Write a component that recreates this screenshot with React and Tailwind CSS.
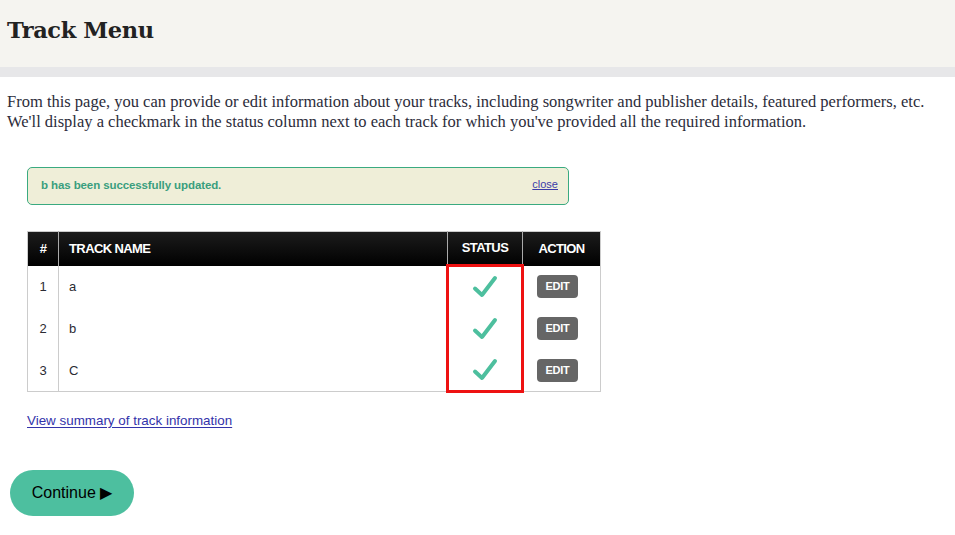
import { useState } from 'react'

const tracks = [
  { id: 1, name: 'a' },
  { id: 2, name: 'b' },
  { id: 3, name: 'C' },
]

function Check() {
  return (
    <svg width="26" height="26" viewBox="0 0 26 26" className="mx-auto block">
      <path d="M3 14.5 L10 21 L23 4" fill="none" stroke="#4dbf9e" strokeWidth="4" strokeLinecap="round" strokeLinejoin="round" />
    </svg>
  )
}

export default function App() {
  const [showAlert, setShowAlert] = useState(true)

  return (
    <div className="min-h-[535px] bg-white text-[#2b2b33]">
      {/* PAGE HEADER */}
      <header className="bg-[#f5f4f0] flex items-center px-[7px] pb-[5px] box-border border-b-[10px] border-[#e7e7e9] h-[77px]">
        <h1 className="text-[22.5px] font-bold font-['DejaVu_Serif',serif] text-[#222] tracking-[-0.4px]">Track Menu</h1>
      </header>

      <main className="px-[7px]">
        <p className="mt-[15px] text-[16.5px] leading-[20px] font-['Liberation_Serif',serif] text-[#2c2c3a]">
          From this page, you can provide or edit information about your tracks, including songwriter and publisher details, featured performers, etc.
          <br />
          We'll display a checkmark in the status column next to each track for which you've provided all the required information.
        </p>

        <div className="ml-5 mt-[35px] w-[574px] font-['Liberation_Sans',sans-serif]">
          {/* SUCCESS ALERT */}
          {showAlert && (
            <div className="w-[542px] h-[38px] flex items-center justify-between pl-[13px] pr-[10px] bg-[#efeed8] border border-[#3aaa80] rounded-[5px]">
              <span className="text-[11.5px] font-bold text-[#3a9e7e] tracking-[-0.1px]">b has been successfully updated.</span>
              <button onClick={() => setShowAlert(false)} className="text-[11px] text-[#3b3ba8] underline -mt-[3px]">close</button>
            </div>
          )}

          {/* TRACK TABLE */}
          <table className="mt-[26px] w-[574px] border-collapse border border-[#cccccc] text-[13px]">
            <thead>
              <tr className="h-[34px] bg-[linear-gradient(#1c1c1c,#000)] text-white font-bold tracking-[-0.6px]">
                <th className="w-[31px] text-center border-r border-[#aaaaaa]">#</th>
                <th className="text-left pl-[10px] border-r border-[#aaaaaa]">TRACK NAME</th>
                <th className="w-[75px] text-center border-r border-[#aaaaaa]">STATUS</th>
                <th className="w-[78px] text-center">ACTION</th>
              </tr>
            </thead>
            <tbody>
              {tracks.map((t, i) => (
                <tr key={t.id} className="h-[42px]">
                  <td className="text-center border-r border-[#cccccc]">{t.id}</td>
                  <td className="pl-[10px]">{t.name}</td>
                  <td className={`border-x-[3px] border-[#ee1111] ${i === 0 ? 'border-t-[3px]' : ''} ${i === tracks.length - 1 ? 'border-b-[3px]' : ''}`}>
                    <Check />
                  </td>
                  <td className="text-left pl-[13px] border-l border-[#cccccc]">
                    <button className="bg-[#666666] text-white text-[11px] font-bold rounded-[4px] w-[41px] h-[23px] tracking-[-0.3px]">EDIT</button>
                  </td>
                </tr>
              ))}
            </tbody>
          </table>

          <a href="#" className="inline-block mt-[18px] text-[13.4px] text-[#3333aa] underline underline-offset-2">View summary of track information</a>
        </div>

        <button className="mt-[38px] ml-[3px] w-[124px] h-[46px] rounded-full bg-[#4dbf9f] text-[16px] text-black font-['Liberation_Sans',sans-serif]">
          Continue ▶
        </button>
      </main>
    </div>
  )
}
